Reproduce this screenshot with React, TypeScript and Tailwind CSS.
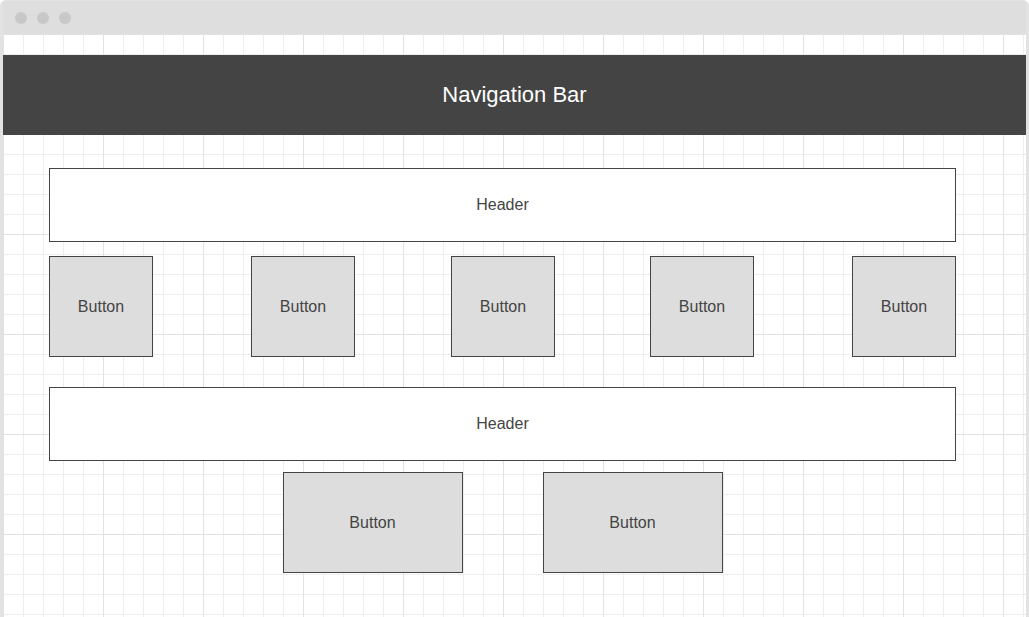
import React from 'react';

const Box: React.FC<{ label: string; className?: string }> = ({ label, className }) => (
  <div className={`flex items-center justify-center border border-[#444] bg-[#dddddd] text-base text-[#444] ${className ?? ''}`}>
    {label}
  </div>
);

const Header: React.FC = () => (
  <div className="flex h-[74px] items-center justify-center border border-[#444] bg-white text-base text-[#444]">
    Header
  </div>
);

export default function App() {
  return (
    <div className="h-[617px] w-[1029px] overflow-hidden bg-white font-['Liberation_Sans',Arial,sans-serif]">
      <div className="flex h-full flex-col rounded-t-[6px] border-x-[3px] border-t border-[#e2e2e2] bg-[#dedede]">
        {/* window title bar */}
        <div className="flex h-[33px] shrink-0 items-center gap-[10px] pl-[12px]">
          <span className="h-[12px] w-[12px] rounded-full bg-[#c8c8c8]" />
          <span className="h-[12px] w-[12px] rounded-full bg-[#c8c8c8]" />
          <span className="h-[12px] w-[12px] rounded-full bg-[#c8c8c8]" />
        </div>

        {/* canvas with grid */}
        <div className="flex-1 bg-white bg-[linear-gradient(to_right,#e2e2e2_1px,transparent_1px),linear-gradient(to_bottom,#e2e2e2_1px,transparent_1px),linear-gradient(to_right,#eeeeee_1px,transparent_1px),linear-gradient(to_bottom,#eeeeee_1px,transparent_1px)] bg-[size:100px_100px,100px_100px,20px_20px,20px_20px] pt-[21px]">
          <div className="flex h-[80px] items-center justify-center pb-[1px] bg-[#444444] text-[22px] text-white">
            Navigation Bar
          </div>

          <div className="ml-[46px] w-[907px] pt-[33px]">
            <Header />
            <div className="mt-[14px] flex">
              <Box label="Button" className="h-[101px] w-[104px]" />
              <Box label="Button" className="ml-[98px] h-[101px] w-[104px]" />
              <Box label="Button" className="ml-[96px] h-[101px] w-[104px]" />
              <Box label="Button" className="ml-[95px] h-[101px] w-[104px]" />
              <Box label="Button" className="ml-[98px] h-[101px] w-[104px]" />
            </div>

            <div className="mt-[30px]">
              <Header />
            </div>
            <div className="mt-[11px] flex justify-center gap-[80px]">
              <Box label="Button" className="h-[101px] w-[180px]" />
              <Box label="Button" className="h-[101px] w-[180px]" />
            </div>
          </div>
        </div>
      </div>
    </div>
  );
}
